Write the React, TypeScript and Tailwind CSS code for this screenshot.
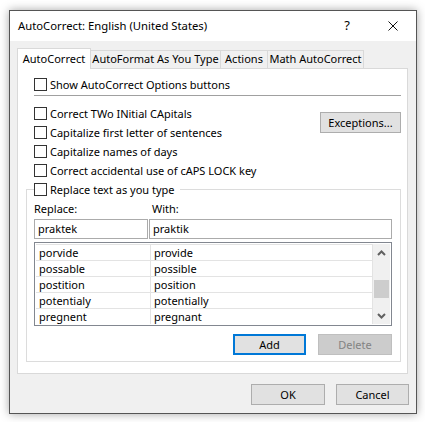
import React from 'react'

const font = { fontFamily: '"Noto Sans", "Open Sans", "Liberation Sans", Arial, sans-serif' }

function CheckRow({ label }: { label: string }) {
  return (
    <div className="h-[19px] flex items-center whitespace-nowrap">
      <span className="w-[13px] h-[13px] border border-[#333333] bg-white shrink-0" />
      <span className="ml-[3px] leading-none">{label}</span>
    </div>
  )
}

function Btn({
  label,
  w,
  variant = 'normal',
}: {
  label: string
  w: string
  variant?: 'normal' | 'default' | 'disabled'
}) {
  const cls =
    variant === 'default'
      ? 'border-2 border-[#0078d7] bg-[#e1e1e1] text-black'
      : variant === 'disabled'
      ? 'border border-[#bfbfbf] bg-[#cccccc] text-[#838383]'
      : 'border border-[#adadad] bg-[#e1e1e1] text-black'
  return (
    <div className={`${w} h-[21px] flex items-center justify-center leading-none ${cls}`}>{label}</div>
  )
}

export default function App() {
  const rows = [
    ['porvide', 'provide'],
    ['possable', 'possible'],
    ['postition', 'position'],
    ['potentialy', 'potentially'],
    ['pregnent', 'pregnant'],
  ]

  return (
    <div className="w-[425px] h-[422px] bg-white overflow-hidden text-[11px] text-black" style={font}>
      <div className="ml-[9px] mt-[10px] w-[408px] border border-[#555555] shadow-[0_0_9px_rgba(0,0,0,0.35)]">
        {/* Title bar */}
        <div className="h-[30px] bg-white flex items-center">
          <span className="pl-[8px] text-[11.3px] whitespace-nowrap">AutoCorrect: English (United States)</span>
          <div className="ml-auto flex h-full">
            <div className="w-[46px] h-full flex items-center justify-center text-[13px]">?</div>
            <div className="w-[46px] h-full flex items-center justify-center">
              <svg width="10" height="10" viewBox="0 0 10 10">
                <path d="M0.5 0.5 L9.5 9.5 M9.5 0.5 L0.5 9.5" stroke="#111" strokeWidth="1" />
              </svg>
            </div>
          </div>
        </div>

        {/* Body */}
        <div className="bg-[#f0f0f0] pl-[7px] pr-[7px] pt-[7px] pb-[8px]">
          {/* Tabs */}
          <div className="flex items-end h-[20px] whitespace-nowrap">
            <div className="relative z-10 -mb-px w-[74px] h-[21px] bg-white border-x border-t border-[#d9d9d9] flex items-center justify-center">
              AutoCorrect
            </div>
            <div className="w-[130px] h-[18px] border-t border-r border-[#d9d9d9] flex items-center justify-center">
              AutoFormat As You Type
            </div>
            <div className="w-[47px] h-[18px] border-t border-r border-[#d9d9d9] flex items-center justify-center">
              Actions
            </div>
            <div className="w-[96px] h-[18px] border-t border-r border-[#d9d9d9] flex items-center justify-center">
              Math AutoCorrect
            </div>
          </div>

          {/* Panel */}
          <div className="w-[391px] bg-white border border-[#d9d9d9] pb-[11px]">
            <div className="mt-[6px] pl-[16px]">
              <CheckRow label="Show AutoCorrect Options buttons" />
            </div>
            <div className="mt-[1px] ml-[16px] mr-[6px] h-px bg-[#a0a0a0]" />

            <div className="mt-[8px] flex">
              <div className="pl-[16px] flex flex-col">
                <CheckRow label="Correct TWo INitial CApitals" />
                <CheckRow label="Capitalize first letter of sentences" />
                <CheckRow label="Capitalize names of days" />
                <CheckRow label="Correct accidental use of cAPS LOCK key" />
              </div>
              <div className="ml-auto mr-[6px] mt-[8px]">
                <Btn label="Exceptions..." w="w-[81px]" />
              </div>
            </div>

            <fieldset className="ml-[8px] mr-[6px] border border-[#dcdcdc] pl-[7px] pr-[8px] pb-[6px]">
              <legend className="pr-[5px] bg-white">
                <CheckRow label="Replace text as you type" />
              </legend>
              <div className="h-[20px] flex items-center">
                <span className="w-[118px]">Replace:</span>
                <span>With:</span>
              </div>
              <div className="flex gap-[1px]">
                <div className="w-[114px] h-[20px] border border-[#ababab] flex items-center pl-[3px]">praktek</div>
                <div className="flex-1 h-[20px] border border-[#ababab] flex items-center pl-[3px]">praktik</div>
              </div>

              {/* List */}
              <div className="mt-[3px] border border-[#828790] p-px flex">
                <div className="flex-1">
                  {rows.map(([a, b]) => (
                    <div key={a} className="h-[16px] border-t border-[#e3e3e3] flex">
                      <div className="w-[115px] border-r border-[#e3e3e3] pl-[3px] flex items-center leading-none">{a}</div>
                      <div className="flex-1 pl-[3px] border-r border-[#e3e3e3] flex items-center leading-none">{b}</div>
                    </div>
                  ))}
                </div>
                <div className="w-[17px] bg-[#f0f0f0] flex flex-col">
                  <div className="h-[17px] flex items-center justify-center">
                    <svg width="9" height="6" viewBox="0 0 9 6">
                      <path d="M1 5 L4.5 1.5 L8 5" fill="none" stroke="#606060" strokeWidth="2" />
                    </svg>
                  </div>
                  <div className="flex-1">
                    <div className="mt-[19px] mx-px h-[18px] bg-[#cdcdcd]" />
                  </div>
                  <div className="h-[17px] flex items-center justify-center">
                    <svg width="9" height="6" viewBox="0 0 9 6">
                      <path d="M1 1 L4.5 4.5 L8 1" fill="none" stroke="#606060" strokeWidth="2" />
                    </svg>
                  </div>
                </div>
              </div>

              <div className="mt-[8px] flex justify-end gap-[12px]">
                <Btn label="Add" w="w-[73px]" variant="default" />
                <Btn label="Delete" w="w-[74px]" variant="disabled" />
              </div>
            </fieldset>
          </div>

          {/* Footer */}
          <div className="mt-[10px] flex justify-end gap-[11px]">
            <Btn label="OK" w="w-[74px]" />
            <Btn label="Cancel" w="w-[73px]" />
          </div>
        </div>
      </div>
    </div>
  )
}
